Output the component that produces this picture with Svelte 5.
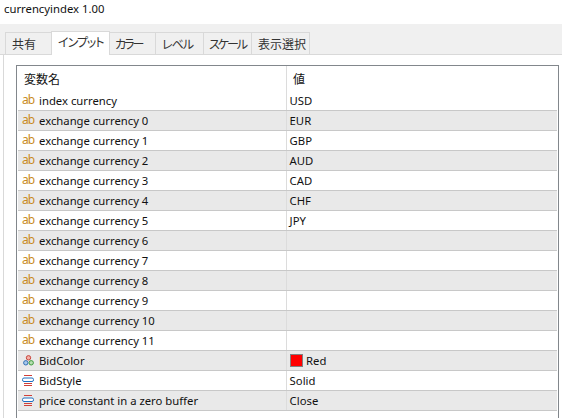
<script lang="ts">
  const tabs = ['共有', 'インプット', 'カラー', 'レベル', 'スケール', '表示選択'];
  const widths = [47, 59, 47, 49, 49, 59];
  const rows = [
    { icon: 'ab', name: 'index currency', value: 'USD' },
    { icon: 'ab', name: 'exchange currency 0', value: 'EUR' },
    { icon: 'ab', name: 'exchange currency 1', value: 'GBP' },
    { icon: 'ab', name: 'exchange currency 2', value: 'AUD' },
    { icon: 'ab', name: 'exchange currency 3', value: 'CAD' },
    { icon: 'ab', name: 'exchange currency 4', value: 'CHF' },
    { icon: 'ab', name: 'exchange currency 5', value: 'JPY' },
    { icon: 'ab', name: 'exchange currency 6', value: '' },
    { icon: 'ab', name: 'exchange currency 7', value: '' },
    { icon: 'ab', name: 'exchange currency 8', value: '' },
    { icon: 'ab', name: 'exchange currency 9', value: '' },
    { icon: 'ab', name: 'exchange currency 10', value: '' },
    { icon: 'ab', name: 'exchange currency 11', value: '' },
    { icon: 'color', name: 'BidColor', value: 'Red', swatch: true },
    { icon: 'enum', name: 'BidStyle', value: 'Solid' },
    { icon: 'enum', name: 'price constant in a zero buffer', value: 'Close' }
  ];
</script>

<div class="dialog">
  <div class="title">currencyindex 1.00</div>
  <div class="strip">
    {#each tabs as tab, i}
      <div
        class="tab"
        class:active={i === 1}
        class:kana={i === 1 || i === 3}
        class:tight={i === 2 || i === 4}
        style="width: {widths[i]}px"
      >{tab}</div>
    {/each}
  </div>
  <div class="panel">
    <div class="table">
      <div class="head">
        <div class="c1">変数名</div>
        <div class="c2">値</div>
      </div>
      {#each rows as row, i}
        <div class="row" class:odd={i % 2 === 1}>
          <div class="c1">
            <span class="icon">
              {#if row.icon === 'ab'}
                <span class="ab">ab</span>
              {:else if row.icon === 'color'}
                <svg width="13" height="13" viewBox="0 0 13 13">
                  <circle cx="6.5" cy="3.8" r="2.2" fill="#f3b0a8" stroke="#c8453a" />
                  <circle cx="3.8" cy="8.8" r="2.2" fill="#a9c8ea" stroke="#2f6fb5" />
                  <circle cx="9.2" cy="8.8" r="2.2" fill="#b5dfb0" stroke="#3e9a3e" />
                </svg>
              {:else}
                <svg width="13" height="13" viewBox="0 0 13 13">
                  <path d="M2 1.5h8M2 9.5h8M2 11.5h8" stroke="#d0403a" fill="none" />
                  <rect x="0.5" y="4" width="11" height="3.5" rx="1.5" fill="#fff" stroke="#1f6fc0" />
                </svg>
              {/if}
            </span>
            <span>{row.name}</span>
          </div>
          <div class="c2">
            {#if row.swatch}<span class="swatch"></span>{/if}{row.value}
          </div>
        </div>
      {/each}
    </div>
  </div>
</div>

<style>
  :global(body) {
    margin: 0;
    background: #fff;
  }
  .dialog {
    width: 562px;
    height: 418px;
    overflow: hidden;
    display: flex;
    flex-direction: column;
    font-family: "Noto Sans", "Noto Sans CJK JP", sans-serif;
    font-size: 11.3px;
    color: #111;
  }
  .title {
    height: 24px;
    flex-shrink: 0;
    box-sizing: border-box;
    padding: 1px 0 0 4px;
    line-height: 16px;
  }
  .strip {
    height: 31px;
    flex-shrink: 0;
    box-sizing: border-box;
    background: #f0f0f0;
    border-bottom: 1px solid #d9d9d9;
    padding: 8px 0 0 5px;
    display: flex;
    align-items: flex-end;
  }
  .tab {
    height: 22px;
    box-sizing: border-box;
    border: 1px solid #d9d9d9;
    border-bottom: none;
    margin-left: -1px;
    padding-left: 6px;
    font-family: "Noto Sans CJK JP", sans-serif;
    font-feature-settings: "palt";
    font-size: 12px;
    line-height: 21px;
    color: #333;
    white-space: nowrap;
  }
  .tab.kana {
    letter-spacing: -1px;
  }
  .tab.tight {
    letter-spacing: -2px;
    padding-left: 5px;
  }
  .tab:first-child {
    margin-left: 0;
  }
  .tab.active {
    background: #fff;
    height: 24px;
    margin-bottom: -1px;
    position: relative;
    line-height: 20px;
  }
  .panel {
    flex: 1;
    min-height: 0;
    border-left: 1px solid #d9d9d9;
    margin-left: 3px;
    padding: 10px 3px 0 12px;
    background: #fff;
  }
  .table {
    height: 353px;
    border: 1px solid #82878c;
    border-width: 1px 1px 0 1px;
    padding: 0 1px 0 1px;
  }
  .head {
    display: flex;
    height: 25px;
    font-family: "Noto Sans CJK JP", sans-serif;
    font-size: 12px;
    line-height: 25px;
  }
  .head .c1 {
    padding-left: 6px;
  }
  .head .c2 {
    padding-left: 6px;
  }
  .row {
    display: flex;
    height: 20px;
    box-sizing: border-box;
    border-bottom: 1px solid #c8c8c8;
    line-height: 19px;
  }
  .row.odd {
    background: #e9e9e9;
  }
  .c1 {
    width: 269px;
    box-sizing: border-box;
    border-right: 1px solid #dcdcdc;
    display: flex;
    align-items: center;
    white-space: nowrap;
  }
  .c2 {
    flex: 1;
    box-sizing: border-box;
    padding-left: 2.6px;
    display: flex;
    align-items: center;
  }
  .icon {
    width: 21px;
    padding-left: 4px;
    box-sizing: border-box;
    display: flex;
    align-items: center;
    flex-shrink: 0;
  }
  .ab {
    color: #c98a1e;
    font-size: 12px;
    letter-spacing: -1px;
    line-height: 14px;
    margin-top: -2px;
  }
  .swatch {
    width: 11px;
    height: 11px;
    background: #f00;
    border: 1px solid #808080;
    margin: 0 3px 0 0.4px;
  }
</style>
